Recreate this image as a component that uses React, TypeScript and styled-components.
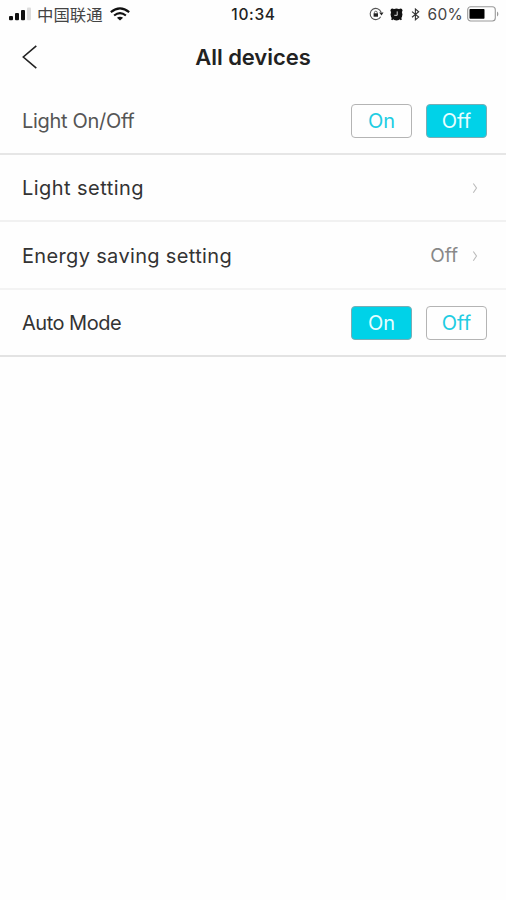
import React, { useState } from 'react';
import styled, { createGlobalStyle } from 'styled-components';

const Global = createGlobalStyle`
  * { box-sizing: border-box; }
  body { margin: 0; background: #fefefe; font-family: Inter, "Noto Sans CJK SC", sans-serif; }
`;

const Screen = styled.main`
  min-height: 900px;
  background: #fefefe;
  color: #222;
`;

const StatusBar = styled.div`
  display: grid;
  grid-template-columns: 1fr auto 1fr;
  height: 28px;
  padding: 0 7px 0 9px;
  align-items: center;
`;

const StatusGroup = styled.div<{ $end?: boolean }>`
  display: flex;
  align-items: center;
  justify-content: ${(p) => (p.$end ? 'flex-end' : 'flex-start')};
`;

const Carrier = styled.span`
  margin: 0 7px 0 6px;
  font: 400 16.4px/28px "Noto Sans CJK SC", sans-serif;
  color: #444;
`;

const Time = styled.span`
  padding-top: 1px;
  font-size: 15.5px;
  font-weight: 500;
  line-height: 27px;
  letter-spacing: 0.65px;
  margin-left: -1px;
`;

const Battery = styled.span`
  margin: 0 4px 0 7px;
  padding-top: 1px;
  font-size: 15.5px;
  line-height: 27px;
  letter-spacing: 0.3px;
  color: #444;
`;

const Header = styled.header`
  display: grid;
  grid-template-columns: 60px 1fr 60px;
  align-items: center;
  height: 60px;
  padding-bottom: 2px;
`;

const BackButton = styled.button`
  display: flex;
  margin: 0;
  padding: 0 0 0 21px;
  border: 0;
  background: none;
`;

const Title = styled.h1`
  margin: 0;
  text-align: center;
  font-size: 22px;
  font-weight: 560;
  line-height: 28px;
  letter-spacing: -0.05px;
  color: #222;
`;

const Row = styled.div<{ $height: number; $line: string }>`
  display: flex;
  align-items: center;
  height: ${(p) => p.$height}px;
  padding: 0 19px 0 22px;
  border-bottom: 2px solid ${(p) => p.$line};
`;

const Label = styled.span<{ $spacing?: number; $color?: string }>`
  flex: 1;
  padding-top: 1px;
  font-size: 20px;
  line-height: 26px;
  letter-spacing: ${(p) => p.$spacing ?? 0}px;
  color: ${(p) => p.$color ?? '#333'};
`;

const Value = styled.span`
  margin-right: 14px;
  padding-top: 2px;
  font-size: 19px;
  line-height: 26px;
  color: #888;
`;

const ChevronSlot = styled.span`
  display: flex;
  margin-right: 9px;
  padding-top: 1px;
`;

const Toggle = styled.div`
  display: flex;
  gap: 14px;
`;

const Choice = styled.button<{ $active: boolean }>`
  width: 61px;
  height: 34px;
  padding: 1px 0 0;
  border: 1.5px solid ${(p) => (p.$active ? '#78adb5' : '#b4b4b4')};
  border-radius: 4px;
  background: ${(p) => (p.$active ? '#00d2e8' : '#fefefe')};
  color: ${(p) => (p.$active ? '#e8feff' : '#20cce2')};
  font: 400 20px/30px Inter, sans-serif;
`;

const Chevron = () => (
  <ChevronSlot>
    <svg width="6" height="12" viewBox="0 0 6 12" fill="none" stroke="#bbb" strokeWidth="1.1">
      <path d="M1.3 1.5 4.5 6 1.3 10.7" />
    </svg>
  </ChevronSlot>
);

const Signal = () => (
  <svg width="22" height="14" viewBox="0 0 22 14" fill="#111">
    <rect x="0" y="9" width="4" height="4.3" rx="1" />
    <rect x="6" y="6" width="4" height="7.3" rx="1" />
    <rect x="12" y="3" width="4" height="10.3" rx="1" />
    <rect x="18" y="0.5" width="4" height="12.8" rx="1" fill="#ddd" />
  </svg>
);

const Wifi = () => (
  <svg width="20" height="14" viewBox="0 0 20 14" fill="none" stroke="#111" strokeWidth="2.1">
    <path d="M.8 5.1Q10-2.5 19.2 5.1M4.1 8.5q5.9-4.8 11.8 0" />
    <path d="M10 13.5 6.9 10.8q3.1-2.3 6.2 0Z" fill="#111" stroke="none" />
  </svg>
);

const RotationLock = () => (
  <svg width="15" height="14" viewBox="0 0 15 14" fill="none" stroke="#555" strokeWidth="1.1">
    <path d="M11.7 9.7A5.6 5.6 0 1 1 12.1 5.2" />
    <path d="m10.2 5.4 4.3.1-2 3Z" fill="#222" stroke="none" />
    <path d="M5.4 6.5V5.6a1.4 1.4 0 0 1 2.8 0v.9" strokeWidth=".9" />
    <rect x="4.6" y="6.3" width="4.4" height="3.4" fill="#222" stroke="none" />
  </svg>
);

const Alarm = () => (
  <svg width="13" height="13" viewBox="0 0 13 13" fill="#111">
    <circle cx="6.5" cy="6.5" r="5.9" />
    <circle cx="2.4" cy="2.4" r="1.9" />
    <circle cx="10.6" cy="2.4" r="1.9" />
    <path d="m3 9.5-1.2 2.3M10 9.5l1.2 2.3" stroke="#111" strokeWidth="1.7" />
    <path d="M7.2 3.4v3.9H4.3" fill="none" stroke="#ddd" strokeWidth="1" />
  </svg>
);

const Bluetooth = () => (
  <svg width="9" height="13" viewBox="0 0 9 13" fill="none" stroke="#333" strokeWidth="1.1">
    <path d="m1 3.6 6.7 5.5-3.3 2.7V1l3.3 2.7L1 9.2" />
  </svg>
);

const BatteryIcon = () => (
  <svg width="32" height="16" viewBox="0 0 32 16">
    <rect x=".7" y=".8" width="27.6" height="14.2" rx="3" fill="none" stroke="#999" strokeWidth="1.1" />
    <rect x="2.5" y="3" width="15" height="9.8" rx=".7" fill="#000" />
    <path d="M30 5.5c1.8.7 1.8 4.3 0 5Z" fill="#999" />
  </svg>
);

const IconSlot = styled.span<{ $gap: number }>`
  display: flex;
  margin-right: ${(p) => p.$gap}px;
`;

function OnOff({ initial }: { initial: 'On' | 'Off' }) {
  const [value, setValue] = useState(initial);
  return (
    <Toggle>
      <Choice $active={value === 'On'} onClick={() => setValue('On')}>On</Choice>
      <Choice $active={value === 'Off'} onClick={() => setValue('Off')}>Off</Choice>
    </Toggle>
  );
}

export default function App() {
  return (
    <Screen>
      <Global />
      <StatusBar>
        <StatusGroup>
          <Signal />
          <Carrier>中国联通</Carrier>
          <Wifi />
        </StatusGroup>
        <Time>10:34</Time>
        <StatusGroup $end>
          <IconSlot $gap={6}><RotationLock /></IconSlot>
          <IconSlot $gap={8}><Alarm /></IconSlot>
          <Bluetooth />
          <Battery>60%</Battery>
          <BatteryIcon />
        </StatusGroup>
      </StatusBar>
      <Header>
        <BackButton aria-label="Back">
          <svg width="17" height="26" viewBox="0 0 17 26" fill="none" stroke="#222" strokeWidth="1.6">
            <path d="M15.3 1.8 2.3 13l13 11.2" />
          </svg>
        </BackButton>
        <Title>All devices</Title>
      </Header>
      <Row $height={67} $line="#e6e6e6">
        <Label $color="#555" $spacing={-0.3}>Light On/Off</Label>
        <OnOff initial="Off" />
      </Row>
      <Row $height={67} $line="#f1f1f1">
        <Label $spacing={0.45}>Light setting</Label>
        <Chevron />
      </Row>
      <Row $height={68} $line="#f3f3f3">
        <Label $spacing={0.34}>Energy saving setting</Label>
        <Value>Off</Value>
        <Chevron />
      </Row>
      <Row $height={67} $line="#e3e3e3">
        <Label $spacing={-0.5}>Auto Mode</Label>
        <OnOff initial="On" />
      </Row>
    </Screen>
  );
}
